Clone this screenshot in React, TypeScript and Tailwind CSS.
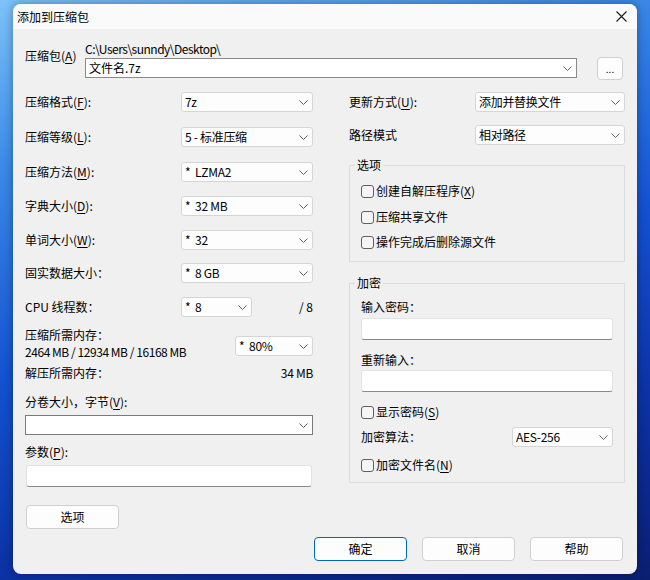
import type { ReactNode } from "react";

function Chevron() {
  return (
    <svg width="9" height="5" viewBox="0 0 9 5" fill="none" className="shrink-0">
      <path d="M0.5 0.5L4.5 4.5L8.5 0.5" stroke="#606060" strokeWidth="1" />
    </svg>
  );
}

function Mn({ c }: { c: string }) {
  return (
    <>
      (<span className="underline underline-offset-2">{c}</span>)
    </>
  );
}

function Select({ value, className = "" }: { value: string; className?: string }) {
  return (
    <div
      className={`flex h-[20px] items-center justify-between rounded-[3px] border border-[#d5d5d5] bg-[#fdfdfd] pl-[3px] pr-[4px] ${className}`}
    >
      <span className="whitespace-pre tracking-[-0.3px]">{value}</span>
      <Chevron />
    </div>
  );
}

function EditCombo({ value = "", className = "" }: { value?: string; className?: string }) {
  return (
    <div className={`flex h-[20px] items-center justify-between border border-[#7a7a7a] bg-white pl-[3px] pr-[4px] ${className}`}>
      <span>{value}</span>
      <Chevron />
    </div>
  );
}

function TextBox({ className = "" }: { className?: string }) {
  return (
    <div className={`h-[22px] rounded-[3px] border border-[#e3e3e3] border-b-[#8a8a8a] bg-white ${className}`} />
  );
}

function Button({ children, primary = false, className = "" }: { children: ReactNode; primary?: boolean; className?: string }) {
  return (
    <button
      className={`flex h-[24px] w-[93px] items-center justify-center rounded-[4px] border bg-[#fdfdfd] ${
        primary ? "border-[#0067c0]" : "border-[#d0d0d0]"
      } ${className}`}
    >
      {children}
    </button>
  );
}

function Check({ children, className = "" }: { children: ReactNode; className?: string }) {
  return (
    <div className={`flex h-[16px] items-center ${className}`}>
      <span className="h-[13px] w-[13px] rounded-[3px] border border-[#5f5f5f] bg-[#f5f5f5]" />
      <span className="ml-[2px]">{children}</span>
    </div>
  );
}

function Row({ label, children, className = "" }: { label: ReactNode; children: ReactNode; className?: string }) {
  return (
    <div className={`flex h-[20px] items-center justify-between ${className}`}>
      <span>{label}</span>
      {children}
    </div>
  );
}

export default function App() {
  return (
    <div className="h-[580px] w-[650px] overflow-hidden bg-[linear-gradient(165deg,#7dc2f8_0%,#3b8ae8_22%,#1452d2_50%,#0c33a6_75%,#0a1f70_100%)] pl-[13px] pt-[4px] font-['Noto_Sans_CJK_SC',sans-serif] text-[12px] leading-4 text-black">
      <div className="flex h-[570px] w-[624px] flex-col overflow-hidden rounded-[8px] bg-[#f0f0f0] shadow-[0_0_10px_rgba(0,0,0,0.35)]">
        {/* title bar */}
        <div className="flex h-[25px] shrink-0 items-center justify-between bg-[#fafafa] pl-[4px] pr-[10px]">
          <span>添加到压缩包</span>
          <svg width="11" height="11" viewBox="0 0 11 11">
            <path d="M0.5 0.5L10.5 10.5M10.5 0.5L0.5 10.5" stroke="#1a1a1a" strokeWidth="1.1" />
          </svg>
        </div>

        <div className="flex flex-col px-[12px] pt-[12px]">
          {/* archive path */}
          <div className="flex">
            <span className="w-[60px] pt-[7px]">
              压缩包<Mn c="A" />
            </span>
            <div className="flex w-[492px] flex-col">
              <span className="h-[16px] tracking-[-0.5px]">C:\Users\sunndy\Desktop\</span>
              <EditCombo value="文件名.7z" className="mt-[1px] border-[#8a8a8a]" />
            </div>
            <button className="ml-[20px] mt-[16px] flex h-[23px] w-[26px] items-center justify-center rounded-[4px] border border-[#d0d0d0] bg-[#fdfdfd] text-[10px]">
              ...
            </button>
          </div>

          <div className="mt-[12px] flex">
            {/* left column */}
            <div className="flex w-[288px] flex-col">
              <Row label={<>压缩格式<Mn c="F" />:</>}>
                <Select value="7z" className="w-[132px]" />
              </Row>
              <Row label={<>压缩等级<Mn c="L" />:</>} className="mt-[15px]">
                <Select value="5 - 标准压缩" className="w-[132px]" />
              </Row>
              <Row label={<>压缩方法<Mn c="M" />:</>} className="mt-[15px]">
                <Select value="*  LZMA2" className="w-[132px]" />
              </Row>
              <Row label={<>字典大小<Mn c="D" />:</>} className="mt-[14px]">
                <Select value="*  32 MB" className="w-[132px]" />
              </Row>
              <Row label={<>单词大小<Mn c="W" />:</>} className="mt-[14px]">
                <Select value="*  32" className="w-[132px]" />
              </Row>
              <Row label="固实数据大小：" className="mt-[13px]">
                <Select value="*  8 GB" className="w-[132px]" />
              </Row>
              <div className="mt-[14px] flex h-[20px] items-center">
                <span className="w-[156px]">CPU 线程数：</span>
                <Select value="*  8" className="w-[71px]" />
                <span className="ml-auto">/ 8</span>
              </div>

              <div className="mt-[9px] flex items-start justify-between">
                <div className="flex flex-col leading-[17px]">
                  <span>压缩所需内存：</span>
                  <span className="tracking-[-0.45px]">2464 MB / 12934 MB / 16168 MB</span>
                </div>
                <Select value="*  80%" className="mt-[10px] w-[78px]" />
              </div>

              <div className="mt-[5px] flex justify-between">
                <span>解压所需内存：</span>
                <span className="tracking-[-0.3px]">34 MB</span>
              </div>

              <span className="mt-[13px]">
                分卷大小，字节<Mn c="V" />:
              </span>
              <EditCombo className="mt-[5px]" />

              <span className="mt-[9px]">
                参数<Mn c="P" />:
              </span>
              <TextBox className="mx-[1px] mt-[5px]" />

              <Button className="ml-[1px] mt-[18px]">选项</Button>
            </div>

            {/* right column */}
            <div className="ml-[36px] flex w-[276px] flex-col">
              <Row label={<>更新方式<Mn c="U" />:</>}>
                <Select value="添加并替换文件" className="w-[150px]" />
              </Row>
              <Row label="路径模式" className="mt-[13px]">
                <Select value="相对路径" className="w-[150px]" />
              </Row>

              <fieldset className="mt-[12px] border border-[#dcdcdc] px-[11px] pb-[11px]">
                <legend className="ml-[-6px] px-[2px]">选项</legend>
                <Check className="mt-[10px]">
                  创建自解压程序<Mn c="X" />
                </Check>
                <Check className="mt-[10px]">压缩共享文件</Check>
                <Check className="mt-[9px]">操作完成后删除源文件</Check>
              </fieldset>

              <fieldset className="mt-[13px] flex flex-col border border-[#dcdcdc] px-[11px] pb-[9px]">
                <legend className="ml-[-6px] px-[2px]">加密</legend>
                <span className="mt-[8px]">输入密码：</span>
                <TextBox className="mt-[3px]" />
                <span className="mt-[12px]">重新输入：</span>
                <TextBox className="mt-[2px]" />
                <Check className="mt-[12px]">
                  显示密码<Mn c="S" />
                </Check>
                <Row label="加密算法：" className="mt-[7px]">
                  <Select value="AES-256" className="w-[101px]" />
                </Row>
                <Check className="mt-[10px]">
                  加密文件名<Mn c="N" />
                </Check>
              </fieldset>
            </div>
          </div>

          {/* dialog buttons */}
          <div className="mr-[2px] mt-[8px] flex justify-end gap-[15px]">
            <Button primary>确定</Button>
            <Button>取消</Button>
            <Button>帮助</Button>
          </div>
        </div>
      </div>
    </div>
  );
}
